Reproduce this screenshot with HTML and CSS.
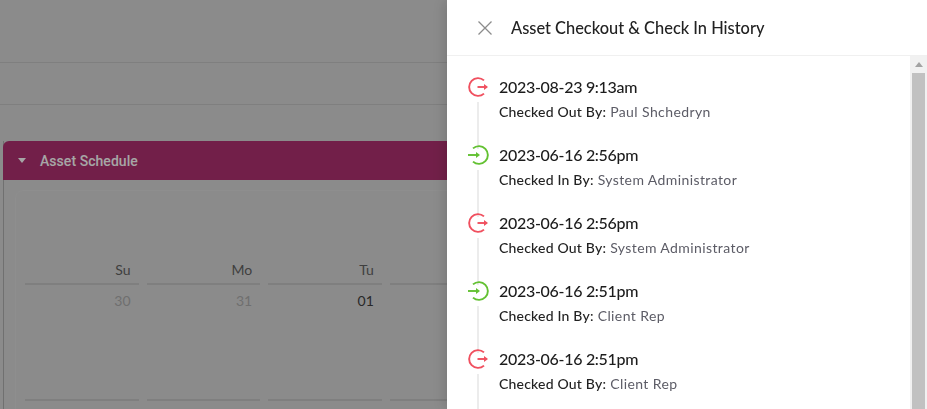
FILE: index.html
```html
<!DOCTYPE html>
<html lang="en">
<head>
<meta charset="utf-8">
<title>Asset Checkout &amp; Check In History</title>
<link rel="stylesheet" href="styles.css">
</head>
<body>
<main class="page">
  <div class="bar bar-top"></div>
  <div class="bar bar-second"></div>
  <section class="panel">
    <header class="panel-head">
      <span class="caret"></span>
      <span class="panel-title">Asset Schedule</span>
    </header>
    <div class="panel-body">
      <div class="calendar">
        <div class="cal-col">
          <div class="cal-day">Su</div>
          <div class="cal-date muted">30</div>
        </div>
        <div class="cal-col">
          <div class="cal-day">Mo</div>
          <div class="cal-date muted">31</div>
        </div>
        <div class="cal-col">
          <div class="cal-day">Tu</div>
          <div class="cal-date">01</div>
        </div>
        <div class="cal-col">
          <div class="cal-day">We</div>
          <div class="cal-date">02</div>
        </div>
      </div>
    </div>
  </section>
</main>
<div class="overlay"></div>
<aside class="drawer">
  <header class="drawer-head">
    <svg class="close" viewBox="0 0 14 14" width="14" height="14"><path d="M.5.5l13 13M13.5.5l-13 13"/></svg>
    <h1 class="drawer-title">Asset Checkout &amp; Check In History</h1>
  </header>
  <div class="drawer-main">
    <ol class="timeline">
      <li class="event">
        <svg class="ico out" viewBox="0 0 20 20" width="20" height="20"><path d="M16 3.4A8.9 8.9 0 1 0 16 16.6"/><path d="M9.5 10h9"/><path class="head" d="M16 6.9L20 10l-4 3.1z"/></svg>
        <div class="when">2023-08-23 9:13am</div>
        <div class="who"><b>Checked Out By:</b> Paul Shchedryn</div>
      </li>
      <li class="event">
        <svg class="ico in" viewBox="0 0 20 20" width="20" height="20"><path d="M5 3.4A8.9 8.9 0 1 1 5 16.6"/><path d="M0 10h9"/><path class="head" d="M8 6.9L12 10l-4 3.1z"/></svg>
        <div class="when">2023-06-16 2:56pm</div>
        <div class="who"><b>Checked In By:</b> System Administrator</div>
      </li>
      <li class="event">
        <svg class="ico out" viewBox="0 0 20 20" width="20" height="20"><path d="M16 3.4A8.9 8.9 0 1 0 16 16.6"/><path d="M9.5 10h9"/><path class="head" d="M16 6.9L20 10l-4 3.1z"/></svg>
        <div class="when">2023-06-16 2:56pm</div>
        <div class="who"><b>Checked Out By:</b> System Administrator</div>
      </li>
      <li class="event">
        <svg class="ico in" viewBox="0 0 20 20" width="20" height="20"><path d="M5 3.4A8.9 8.9 0 1 1 5 16.6"/><path d="M0 10h9"/><path class="head" d="M8 6.9L12 10l-4 3.1z"/></svg>
        <div class="when">2023-06-16 2:51pm</div>
        <div class="who"><b>Checked In By:</b> Client Rep</div>
      </li>
      <li class="event">
        <svg class="ico out" viewBox="0 0 20 20" width="20" height="20"><path d="M16 3.4A8.9 8.9 0 1 0 16 16.6"/><path d="M9.5 10h9"/><path class="head" d="M16 6.9L20 10l-4 3.1z"/></svg>
        <div class="when">2023-06-16 2:51pm</div>
        <div class="who"><b>Checked Out By:</b> Client Rep</div>
      </li>
    </ol>
    <div class="scrollbar">
      <span class="scroll-up"></span>
      <span class="scroll-thumb"></span>
    </div>
  </div>
</aside>
</body>
</html>
```

FILE: styles.css
```css
* { box-sizing: border-box; }
html, body { margin: 0; height: 100%; overflow: hidden; background: #d6d6d6; }
body { font-family: Lato, "Open Sans", sans-serif; color: #1f1f1f; }

.page { height: 409px; overflow: hidden; }
.bar { border-bottom: 1px solid #c3c3c3; }
.bar-top { height: 63px; }
.bar-second { height: 42px; }

.panel { margin: 36px 0 0 3px; border-left: 1px solid #adadad; }
.panel-head {
  height: 39px; background: #af3170; border-radius: 6px 0 0 0; margin-left: -1px;
  display: flex; align-items: center; padding-left: 15px; gap: 14px;
  color: #fff; font: 500 14px Roboto, sans-serif; letter-spacing: .05px;
}
.caret { width: 0; height: 0; border: 4.5px solid transparent; border-top: 5px solid #fff; border-bottom: 0; }
.panel-body { margin: 10px 0 0 11px; border: 1px solid #dadada; border-radius: 8px 0 0 0; padding: 69px 0 0 9px; height: 240px; }
.calendar { display: flex; gap: 8px; }
.cal-col { width: 113.6px; flex: none; height: 141px; border-bottom: 2px solid #c3c3c3; }
.cal-day {
  height: 25px; padding-right: 8px; text-align: right; font-size: 14px; line-height: 20px;
  color: #626262; border-bottom: 2px solid #c3c3c3;
}
.cal-date { padding: 6px 8px 0 0; text-align: right; font-size: 14px; line-height: 20px; color: #404040; }
.cal-date.muted { color: #ababab; }

.overlay { position: fixed; inset: 0; background: rgba(0, 0, 0, .35); }

.drawer {
  position: fixed; top: 0; right: 0; bottom: 0; width: 480px; background: #fff;
  box-shadow: -4px 0 12px rgba(0, 0, 0, .12); display: flex; flex-direction: column;
}
.drawer-head {
  height: 56px; flex: none; display: flex; align-items: center; gap: 19px; padding-left: 31px;
  border-bottom: 1px solid #f0f0f0;
}
.close { fill: none; stroke: #8c8c8c; stroke-width: 1.3; }
.drawer-title { margin: 0; font-size: 16.4px; font-weight: 500; color: #222; }

.drawer-main { flex: 1; display: flex; min-height: 0; }
.timeline { flex: 1; margin: 0; padding: 20px 0 0 21px; list-style: none; overflow: hidden; }
.event { position: relative; height: 68px; padding-left: 31px; }
.event::before {
  content: ""; position: absolute; left: 9px; top: 26px; bottom: -5px; width: 2px; background: #ececec;
}
.ico { position: absolute; left: 0; top: 1px; fill: none; stroke-width: 1.9; overflow: visible; }
.ico .head { fill: currentColor; stroke: none; }
.ico.out { stroke: #f0505f; color: #f0505f; }
.ico.in { stroke: #63c132; color: #63c132; }
.when { font-size: 16px; line-height: 22px; font-weight: 500; color: #1c1c1c; letter-spacing: -.3px; }
.who { margin-top: 5px; font-size: 14px; line-height: 18px; color: #5c5c66; letter-spacing: .4px; }
.who b { font-weight: 500; color: #222; letter-spacing: .2px; }

.scrollbar { width: 17px; flex: none; background: #f1f1f1; display: flex; flex-direction: column; align-items: center; padding-top: 6px; }
.scroll-up { width: 0; height: 0; flex: none; border: 4px solid transparent; border-bottom: 5px solid #a3a3a3; border-top: 0; }
.scroll-thumb { width: 13px; flex: 1; margin-top: 6px; background: #c1c1c1; }
```
